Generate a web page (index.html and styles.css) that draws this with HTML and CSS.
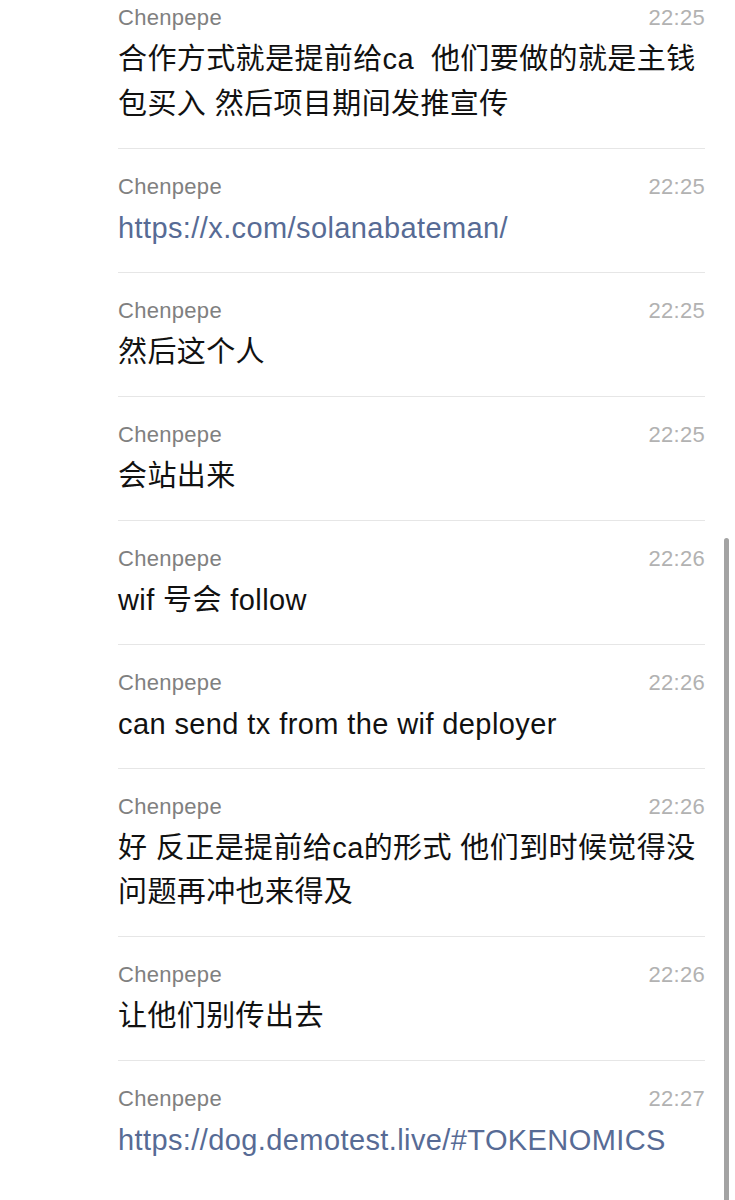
FILE: index.html
```html
<!DOCTYPE html>
<html lang="zh-CN">
<head>
  <meta charset="UTF-8" />
  <title>Chenpepe</title>
  <meta name="viewport" content="width=device-width, initial-scale=1" />
  <link rel="stylesheet" href="styles.css">
</head>
<body>

<main class="chat">
  <div class="msg">
    <div class="msg-head"><span class="name">Chenpepe</span><span class="time">22:25</span></div>
    <div class="msg-body">合作方式就是提前给ca&nbsp; 他们要做的就是主钱包买入 然后项目期间发推宣传</div>
  </div>
  <div class="msg">
    <div class="msg-head"><span class="name">Chenpepe</span><span class="time">22:25</span></div>
    <div class="msg-body"><a href="#">https://x.com/solanabateman/</a></div>
  </div>
  <div class="msg">
    <div class="msg-head"><span class="name">Chenpepe</span><span class="time">22:25</span></div>
    <div class="msg-body">然后这个人</div>
  </div>
  <div class="msg">
    <div class="msg-head"><span class="name">Chenpepe</span><span class="time">22:25</span></div>
    <div class="msg-body">会站出来</div>
  </div>
  <div class="msg">
    <div class="msg-head"><span class="name">Chenpepe</span><span class="time">22:26</span></div>
    <div class="msg-body">wif 号会 follow</div>
  </div>
  <div class="msg">
    <div class="msg-head"><span class="name">Chenpepe</span><span class="time">22:26</span></div>
    <div class="msg-body">can send tx from the wif deployer</div>
  </div>
  <div class="msg">
    <div class="msg-head"><span class="name">Chenpepe</span><span class="time">22:26</span></div>
    <div class="msg-body">好 反正是提前给ca的形式 他们到时候觉得没问题再冲也来得及</div>
  </div>
  <div class="msg">
    <div class="msg-head"><span class="name">Chenpepe</span><span class="time">22:26</span></div>
    <div class="msg-body">让他们别传出去</div>
  </div>
  <div class="msg">
    <div class="msg-head"><span class="name">Chenpepe</span><span class="time">22:27</span></div>
    <div class="msg-body"><a href="#">https://dog.demotest.live/#TOKENOMICS</a></div>
  </div>
</main>

<div class="scrollbar"></div>

</body>
</html>
```

FILE: styles.css
```css
html, body {
  margin: 0;
  background: #fff;
  overflow: hidden;
}
body {
  font-family: "Liberation Sans", "Noto Sans CJK SC", sans-serif;
  color: #111;
}

.chat {
  width: 587px;
  margin: -20px 0 0 118px;
}

.msg {
  padding: 25px 0 21.5px;
  border-bottom: 1px solid #e6e6e6;
}
.msg:last-child {
  border-bottom: none;
}

.msg-head {
  display: flex;
  justify-content: space-between;
  font-size: 22px;
  line-height: 26px;
  letter-spacing: 0.3px;
}
.name {
  color: #808080;
}
.time {
  color: #b2b2b2;
}

.msg-body {
  margin-top: 6px;
  font-size: 29px;
  line-height: 44.5px;
  letter-spacing: 0.4px;
}
.msg-body a {
  color: #576b95;
  text-decoration: none;
}

.scrollbar {
  position: fixed;
  left: 724px;
  top: 538px;
  width: 5px;
  height: 680px;
  border-radius: 3px;
  background: #a3a3a3;
}
```
